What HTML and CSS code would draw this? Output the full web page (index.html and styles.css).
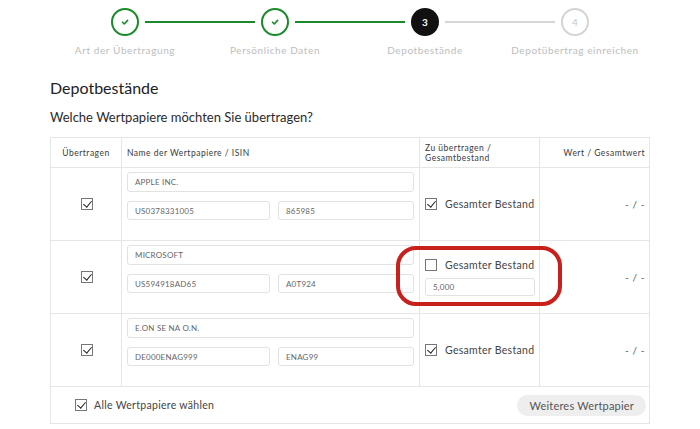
FILE: index.html
```html
<!DOCTYPE html>
<html lang="de">
<head>
<meta charset="utf-8">
<link rel="stylesheet" href="styles.css">
</head>
<body>
<div class="page">
  <div class="stepper">
    <div class="circles">
      <span class="circle done"><svg width="10" height="10" viewBox="0 0 10 10"><path d="M2.5 5.2 L4.3 7 L7.6 3.4" fill="none" stroke="#1a8a2a" stroke-width="1.6" stroke-linecap="round" stroke-linejoin="round"/></svg></span>
      <span class="line green"></span>
      <span class="circle done"><svg width="10" height="10" viewBox="0 0 10 10"><path d="M2.5 5.2 L4.3 7 L7.6 3.4" fill="none" stroke="#1a8a2a" stroke-width="1.6" stroke-linecap="round" stroke-linejoin="round"/></svg></span>
      <span class="line green"></span>
      <span class="circle active">3</span>
      <span class="line gray"></span>
      <span class="circle todo">4</span>
    </div>
    <div class="labels">
      <span>Art der Übertragung</span>
      <span>Persönliche Daten</span>
      <span>Depotbestände</span>
      <span>Depotübertrag einreichen</span>
    </div>
  </div>

  <h1 class="title">Depotbestände</h1>
  <h2 class="subtitle">Welche Wertpapiere möchten Sie übertragen?</h2>

  <div class="table">
    <div class="row head">
      <div class="cell c1">Übertragen</div>
      <div class="cell c2">Name der Wertpapiere / ISIN</div>
      <div class="cell c3">Zu übertragen /<br>Gesamtbestand</div>
      <div class="cell c4">Wert / Gesamtwert</div>
    </div>

    <div class="row item">
      <div class="cell c1"><span class="cb checked"></span></div>
      <div class="cell c2">
        <div class="field full">APPLE INC.</div>
        <div class="pair"><div class="field">US0378331005</div><div class="field">865985</div></div>
      </div>
      <div class="cell c3"><label class="opt"><span class="cb checked"></span>Gesamter Bestand</label></div>
      <div class="cell c4 val">- / -</div>
    </div>

    <div class="row item">
      <div class="cell c1"><span class="cb checked"></span></div>
      <div class="cell c2">
        <div class="field full">MICROSOFT</div>
        <div class="pair"><div class="field">US594918AD65</div><div class="field">A0T924</div></div>
      </div>
      <div class="cell c3 partial">
        <label class="opt"><span class="cb"></span>Gesamter Bestand</label>
        <div class="field amount">5,000</div>
        <span class="highlight"></span>
      </div>
      <div class="cell c4 val">- / -</div>
    </div>

    <div class="row item">
      <div class="cell c1"><span class="cb checked"></span></div>
      <div class="cell c2">
        <div class="field full">E.ON SE NA O.N.</div>
        <div class="pair"><div class="field">DE000ENAG999</div><div class="field">ENAG99</div></div>
      </div>
      <div class="cell c3"><label class="opt"><span class="cb checked"></span>Gesamter Bestand</label></div>
      <div class="cell c4 val">- / -</div>
    </div>

    <div class="foot">
      <label class="opt all"><span class="cb checked"></span>Alle Wertpapiere wählen</label>
      <button class="more">Weiteres Wertpapier</button>
    </div>
  </div>
</div>
</body>
</html>
```

FILE: styles.css
```css
* { box-sizing: border-box; }
html, body { margin: 0; padding: 0; background: #fff; }
body {
  font-family: "Lato", "Noto Sans", sans-serif;
  color: #333;
  width: 700px;
  height: 429px;
  overflow: hidden;
}
.page { padding-top: 8px; }

.circles {
  display: flex;
  align-items: center;
  padding-left: 111px;
  height: 28px;
}
.circle {
  width: 28px;
  height: 28px;
  border-radius: 50%;
  display: flex;
  align-items: center;
  justify-content: center;
  font-size: 10px;
  font-weight: 700;
  flex: none;
}
.circle.done { border: 2px solid #1a8a2a; background: #fff; }
.circle.active { background: #111; color: #fff; }
.circle.todo { border: 2px solid #d4d4d4; color: #c8c8c8; font-weight: 400; }
.line { width: 110px; height: 2px; margin: 0 6px; flex: none; }
.line.green { background: #1a8a2a; }
.line.gray { background: #d6d6d6; }

.labels {
  display: grid;
  grid-template-columns: repeat(4, 150px);
  padding-left: 50px;
  margin-top: 8px;
  font-size: 10px;
  letter-spacing: 0.6px;
  color: #bdbdbd;
  text-align: center;
  line-height: 12px;
}

.title {
  margin: 22px 0 0 50px;
  font-size: 16px;
  font-weight: 400;
  color: #222;
  line-height: 20px;
}
.subtitle {
  margin: 10px 0 0 50px;
  font-size: 13px;
  font-weight: 400;
  color: #2a2a2a;
  line-height: 18px;
}

.table {
  margin: 11px 0 0 50px;
  width: 600px;
  border: 1px solid #e6e6e6;
}
.row {
  display: grid;
  grid-template-columns: 70px 298px 120px 110px;
  border-bottom: 1px solid #e6e6e6;
}
.cell { border-left: 1px solid #e6e6e6; }
.cell.c1 { border-left: none; }

.head { height: 30px; font-size: 8.5px; letter-spacing: 0.5px; color: #3a3a3a; }
.head .cell { display: flex; align-items: center; padding-left: 5px; }
.head .c1 { justify-content: center; padding-left: 0; }
.head .c3 { line-height: 10px; padding-top: 1px; }
.head .c4 { justify-content: flex-end; padding-right: 4px; }

.item { height: 73px; }
.item .c1 { display: flex; align-items: center; justify-content: center; padding-left: 2px; }
.item .c2 { padding: 4px 5px 0 5px; }
.field {
  height: 20px;
  border: 1px solid #e2e2e2;
  border-radius: 3px;
  font-size: 8px;
  color: #666;
  display: flex;
  align-items: center;
  padding-left: 7px;
  letter-spacing: 0.2px;
}
.pair { display: flex; gap: 8px; margin-top: 9px; }
.pair .field { height: 19px; }
.pair .field:first-child { width: 143px; }
.pair .field:last-child { flex: 1; }

.item .c3 { display: flex; flex-direction: column; justify-content: center; padding-left: 5px; position: relative; }
.opt { display: flex; align-items: center; font-size: 10.5px; color: #444; letter-spacing: 0.3px; line-height: 12px; }
.cb {
  width: 12px;
  height: 12px;
  border: 1px solid #777;
  margin-right: 8px;
  position: relative;
  flex: none;
  background: #fff;
}
.cb.checked::after {
  content: "";
  position: absolute;
  left: 3px;
  top: 0px;
  width: 4px;
  height: 7px;
  border-right: 1.3px solid #222;
  border-bottom: 1.3px solid #222;
  transform: rotate(40deg);
}
.item .c1 .cb { margin-right: 0; }
.partial { gap: 7px; }
.field.amount { width: 110px; height: 18px; }
.highlight {
  position: absolute;
  left: -24px;
  top: 5px;
  width: 166px;
  height: 60px;
  border: 4px solid #c8211d;
  border-radius: 20px;
  pointer-events: none;
}

.val { display: flex; align-items: center; justify-content: flex-end; padding-right: 4px; font-size: 10px; color: #555; letter-spacing: 0.6px; }

.foot {
  height: 36px;
  display: flex;
  align-items: center;
  justify-content: space-between;
  padding: 0 3px 0 24px;
}
.foot .opt { font-size: 10.5px; }
.foot .cb { margin-right: 7px; }
.more {
  font-family: inherit;
  border: none;
  background: #eeeeee;
  border-radius: 11px;
  height: 21px;
  padding: 0 12px;
  font-size: 11px;
  color: #555;
  letter-spacing: 0.2px;
}
```
